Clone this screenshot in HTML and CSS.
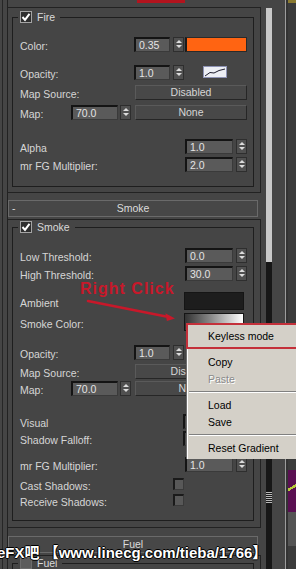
FILE: index.html
```html
<!DOCTYPE html>
<html lang="en">
<head>
  <meta charset="UTF-8">
  <meta name="viewport" content="width=device-width, initial-scale=1.0">
  <title>Fire Effect Parameters</title>
  <link rel="stylesheet" href="styles.css">
</head>
<body>
  <div class="screen">
    <div class="panel">
      <div class="stack">
        <div class="top"></div>

        <div class="rollout fire">
          <fieldset class="group">
            <legend><span class="chk"><svg width="12" height="12" viewBox="0 0 12 12"><path d="M2.5 6 L5 8.8 L9.5 2.8" fill="none" stroke="#fff" stroke-width="2"/></svg></span>Fire</legend>
            <div class="row g13"><span class="lbl mid">Color:</span><span class="val c">0.35</span><span class="arr"></span><span class="swatch orange"></span></div>
            <div class="row g12"><span class="lbl mid">Opacity:</span><span class="val c">1.0</span><span class="arr"></span>
              <span class="curve"><svg width="24" height="12" viewBox="0 0 24 12"><rect x="0.5" y="0.5" width="23" height="11" fill="#eceef4" stroke="#8d92b4"/><path d="M2 10 L7 6.5 L11 7 L16 4.5 L22 3" fill="none" stroke="#1c1c2c" stroke-width="1"/></svg></span></div>
            <div class="row g4"><span class="lbl btnl">Map Source:</span><span class="btn">Disabled</span></div>
            <div class="row g4"><span class="lbl short">Map:</span><span class="val m">70.0</span><span class="arr tight"></span><span class="btn after">None</span></div>
            <div class="row g18"><span class="lbl">Alpha</span><span class="val w">1.0</span><span class="arr"></span></div>
            <div class="row g2"><span class="lbl">mr FG Multiplier:</span><span class="val w">2.0</span><span class="arr"></span></div>
          </fieldset>
        </div>

        <div class="rhead first"><span class="minus">-</span><span class="title">Smoke</span></div>

        <div class="rollout smoke">
          <fieldset class="group">
            <legend><span class="chk"><svg width="12" height="12" viewBox="0 0 12 12"><path d="M2.5 6 L5 8.8 L9.5 2.8" fill="none" stroke="#fff" stroke-width="2"/></svg></span>Smoke</legend>
            <div class="row g14"><span class="lbl">Low Threshold:</span><span class="val w">0.0</span><span class="arr"></span></div>
            <div class="row g2"><span class="lbl">High Threshold:</span><span class="val w">30.0</span><span class="arr"></span></div>
            <div class="row tall g11"><span class="lbl sw">Ambient</span><span class="swatch black"></span></div>
            <div class="row tall g3"><span class="lbl sw">Smoke Color:</span><span class="swatch grad"></span></div>
            <div class="row g13"><span class="lbl mid">Opacity:</span><span class="val c">1.0</span><span class="arr"></span>
              <span class="curve"><svg width="24" height="12" viewBox="0 0 24 12"><rect x="0.5" y="0.5" width="23" height="11" fill="#eceef4" stroke="#8d92b4"/><path d="M2 10 L7 6.5 L11 7 L16 4.5 L22 3" fill="none" stroke="#1c1c2c" stroke-width="1"/></svg></span></div>
            <div class="row g3"><span class="lbl btnl">Map Source:</span><span class="btn">Disabled</span></div>
            <div class="row g1"><span class="lbl short">Map:</span><span class="val m">70.0</span><span class="arr tight"></span><span class="btn after">None</span></div>
            <div class="row g17"><span class="lbl box">Visual</span><span class="val drop"></span></div>
            <div class="row g1"><span class="lbl box">Shadow Falloff:</span><span class="val drop"></span></div>
            <div class="row g10"><span class="lbl">mr FG Multiplier:</span><span class="val w">1.0</span><span class="arr"></span></div>
            <div class="row low g6"><span class="lbl cbl">Cast Shadows:</span><span class="cb"></span></div>
            <div class="row low g4"><span class="lbl cbl">Receive Shadows:</span><span class="cb"></span></div>
          </fieldset>
        </div>

        <div class="rhead second"><span class="minus"></span><span class="title">Fuel</span></div>

        <div class="rollout fuel">
          <fieldset class="group">
            <legend><span class="chk dim"></span>Fuel</legend>
          </fieldset>
        </div>
      </div>
    </div>

    <div class="side">
      <div class="sgap"></div>
      <div class="sbar">
        <div class="pad"></div>
        <div class="thumb"></div>
        <div class="track"></div>
        <div class="grip"></div>
        <div class="track rest"></div>
      </div>
      <div class="sgap wide"></div>
      <div class="vline"></div>
      <div class="vgap"></div>
      <div class="view">
        <div class="ytop"></div>
        <div class="vspace"></div>
        <div class="purple"></div>
        <div class="vgray"></div>
      </div>
    </div>
  </div>

  <div class="mark"></div>

  <div class="note">Right Click</div>
  <svg class="pointer" width="94" height="28" viewBox="0 0 94 28">
    <path d="M2 5 L80 20.5" stroke="#c8182a" stroke-width="2.5" stroke-linecap="round"/>
    <polygon points="89,22.5 79.4,17.2 80.9,24.9" fill="#c8182a"/>
  </svg>

  <div class="menu">
    <div class="mi hot">Keyless mode</div>
    <div class="mi first">Copy</div>
    <div class="mi off">Paste</div>
    <div class="sep"></div>
    <div class="mi">Load</div>
    <div class="mi">Save</div>
    <div class="sep"></div>
    <div class="mi">Reset Gradient</div>
  </div>

  <div class="wm">eFX吧 【www.linecg.com/tieba/1766】</div>
</body>
</html>
```

FILE: styles.css
```css
html, body {
  margin: 0;
  padding: 0;
  overflow: hidden;
}

body {
  width: 296px;
  height: 569px;
  position: relative;
  background-color: #454545;
  font-family: "Liberation Sans", Arial, sans-serif;
  font-size: 10.5px;
  color: #d6d6d6;
}

.screen {
  display: flex;
  height: 569px;
}

/* command panel */
.panel {
  width: 259px;
  flex: none;
  margin-left: 2px;
  border-left: 1px solid #262626;
}

.stack {
  height: 100%;
  margin-left: 4px;
  border-left: 1px solid #222;
}

.top {
  height: 7px;
}

.rollout {
  width: 253px;
  box-sizing: border-box;
  border: 1px solid #222;
  border-left: none;
  padding: 3px 6px 5px 4px;
}

.rollout.smoke {
  margin-top: 2px;
  padding: 1px 6px 6px 4px;
}

.rollout.fuel {
  margin-top: 2px;
  padding: 1px 6px 0 4px;
  border-bottom: none;
}

.group {
  width: 242px;
  min-width: 0;
  box-sizing: border-box;
  margin: 0;
  padding: 0 5px 14px 7px;
  border: 1px solid #1e1e1e;
}

.fuel .group {
  height: 30px;
  border-bottom: none;
}

.group legend {
  display: flex;
  align-items: center;
  gap: 5px;
  height: 12px;
  line-height: 12px;
  margin-left: -2px;
  padding: 0 5px 0 2px;
  color: #dadada;
}

.chk {
  width: 12px;
  height: 12px;
  box-sizing: border-box;
  display: block;
  background-color: #2e2e2e;
  border: 1px solid #a4a4a4;
}

.chk svg {
  display: block;
  margin: -1px;
}

.chk.dim {
  background-color: #5c5c5c;
  border-color: #6c6c6c;
}

/* parameter rows */
.row {
  display: flex;
  align-items: center;
  height: 16px;
}

.row.tall {
  height: 18px;
}

.row.low {
  height: 12px;
}

.g1 { margin-top: 1px; }
.g2 { margin-top: 2px; }
.g3 { margin-top: 3px; }
.g4 { margin-top: 4px; }
.g6 { margin-top: 6px; }
.g10 { margin-top: 10px; }
.g11 { margin-top: 11px; }
.g12 { margin-top: 12px; }
.g13 { margin-top: 13px; }
.g14 { margin-top: 14px; }
.g17 { margin-top: 17px; }
.g18 { margin-top: 18px; }

.lbl {
  flex: none;
  width: 165px;
  padding-top: 3px;
  line-height: 12px;
  white-space: nowrap;
}

.lbl.mid { width: 114px; }
.lbl.btnl { width: 115px; }
.lbl.short { width: 51px; }
.lbl.sw { width: 164px; }
.lbl.box { width: 163px; }
.lbl.cbl { width: 153px; }

.val {
  flex: none;
  height: 15px;
  box-sizing: border-box;
  padding-left: 3px;
  line-height: 12px;
  background-color: #5a5a5a;
  border-top: 2px solid #141414;
  border-left: 2px solid #141414;
  border-right: 1px solid #3a3a3a;
  border-bottom: 1px solid #3a3a3a;
  color: #e4e4e4;
}

.val.c { width: 36px; }
.val.w { width: 48px; }
.val.m { width: 47px; }

.val.drop {
  width: 62px;
  background-color: #4a4a4a;
}

.arr {
  flex: none;
  width: 11px;
  height: 15px;
  box-sizing: border-box;
  margin-left: 3px;
  display: flex;
  flex-direction: column;
  justify-content: space-evenly;
  align-items: center;
  background-color: #505050;
  border: 1px solid #2e2e2e;
}

.arr.tight {
  margin-left: 2px;
}

.arr::before {
  content: "";
  border-left: 3px solid transparent;
  border-right: 3px solid transparent;
  border-bottom: 3px solid #dcdcdc;
}

.arr::after {
  content: "";
  border-left: 3px solid transparent;
  border-right: 3px solid transparent;
  border-top: 3px solid #dcdcdc;
}

.swatch {
  flex: none;
  box-sizing: border-box;
}

.swatch.orange {
  width: 62px;
  height: 15px;
  margin-left: 1px;
  background-color: #ff6412;
  border: 1px solid #2a2a2a;
  border-left: 2px solid #1a1a1a;
}

.swatch.black {
  width: 60px;
  height: 18px;
  background-color: #1d1d1d;
  border: 1px solid #151515;
}

.swatch.grad {
  width: 60px;
  height: 18px;
  background: linear-gradient(to right, #333 0%, #8a8a8a 45%, #fff 100%);
  border: 1px solid #151515;
}

.curve {
  flex: none;
  margin-left: 19px;
  height: 12px;
}

.curve svg {
  display: block;
}

.btn {
  flex: none;
  width: 112px;
  height: 15px;
  box-sizing: border-box;
  line-height: 13px;
  text-align: center;
  background-color: #484848;
  border: 1px solid #262626;
  border-top-color: #5a5a5a;
  border-left-color: #5a5a5a;
  color: #d6d6d6;
}

.btn.after {
  margin-left: 4px;
}

.cb {
  flex: none;
  width: 11px;
  height: 12px;
  box-sizing: border-box;
  background-color: #585858;
  border-top: 2px solid #1a1a1a;
  border-left: 2px solid #1a1a1a;
  border-right: 1px solid #3a3a3a;
  border-bottom: 1px solid #3a3a3a;
}

/* rollout headers */
.rhead {
  width: 250px;
  height: 17px;
  box-sizing: border-box;
  display: grid;
  grid-template-columns: 18px 1fr 18px;
  align-items: center;
  line-height: 13px;
  background-color: #474747;
  border: 1px solid #6a6a6a;
  color: #dcdcdc;
}

.rhead.first { margin-top: 7px; }
.rhead.second { margin-top: 8px; }

.minus {
  padding-left: 3px;
}

.title {
  text-align: center;
}

/* right strip: scrollbar and viewport edge */
.side {
  display: flex;
  flex: 1;
  height: 569px;
}

.sgap {
  width: 4px;
  flex: none;
}

.sgap.wide {
  width: 13px;
}

.sbar {
  width: 6px;
  flex: none;
  display: flex;
  flex-direction: column;
}

.sbar .pad { height: 8px; }
.sbar .thumb { height: 254px; background-color: #c9c9c9; }
.sbar .track { height: 229px; background-color: #171717; }
.sbar .grip {
  height: 13px;
  background: repeating-linear-gradient(#171717 0 1px, #b8b8b8 1px 2px);
}
.sbar .track.rest { flex: 1; height: auto; }

.vline {
  width: 1px;
  flex: none;
  background-color: #9c9c9c;
}

.vgap {
  width: 2px;
  flex: none;
  background-color: #333;
}

.view {
  flex: 1;
  display: flex;
  flex-direction: column;
  background-color: #3b3b3b;
}

.ytop { height: 3px; background-color: #8a7a30; }
.vspace { height: 467px; }
.purple {
  height: 42px;
  background: linear-gradient(150deg, #5a0f52 0 40%, #b6c83a 40% 46%, #5a0f52 46%);
}
.vgray { height: 34px; background-color: #545454; }

/* overlays */
.mark {
  position: absolute;
  left: 137px;
  top: 0;
  width: 48px;
  height: 3px;
  background-color: #b3141e;
}

.note {
  position: absolute;
  left: 80px;
  top: 281px;
  font-size: 16px;
  font-weight: bold;
  letter-spacing: 1px;
  line-height: 16px;
  color: #c8182a;
}

.pointer {
  position: absolute;
  left: 86px;
  top: 296px;
}

.menu {
  position: absolute;
  left: 186px;
  top: 323px;
  width: 116px;
  height: 136px;
  box-sizing: border-box;
  background-color: #d4d0c8;
  border-left: 1px solid #6e6e6e;
  box-shadow: inset 1px 0 #fff;
  color: #000;
}

.mi {
  height: 17px;
  line-height: 17px;
  padding-left: 21px;
  white-space: nowrap;
}

.mi.hot {
  height: 26px;
  line-height: 22px;
  box-sizing: border-box;
  margin-left: -1px;
  padding-left: 20px;
  border: 2px solid #c4303a;
}

.mi.first {
  margin-top: 5px;
}

.mi.off {
  color: #8a8a8a;
  text-shadow: 1px 1px 0 #fff;
}

.sep {
  height: 9px;
  box-sizing: border-box;
  padding-top: 3px;
  margin-left: 2px;
}

.sep::before {
  content: "";
  display: block;
  border-top: 1px solid #808080;
  border-bottom: 1px solid #fff;
}

.wm {
  position: absolute;
  left: -3px;
  top: 544px;
  font-family: "Liberation Sans", "Noto Sans CJK SC", sans-serif;
  font-size: 15px;
  font-weight: bold;
  line-height: 17px;
  white-space: nowrap;
  color: #fff;
  text-shadow: -1px 0 #000, 1px 0 #000, 0 -1px #000, 0 1px #000;
}
```
